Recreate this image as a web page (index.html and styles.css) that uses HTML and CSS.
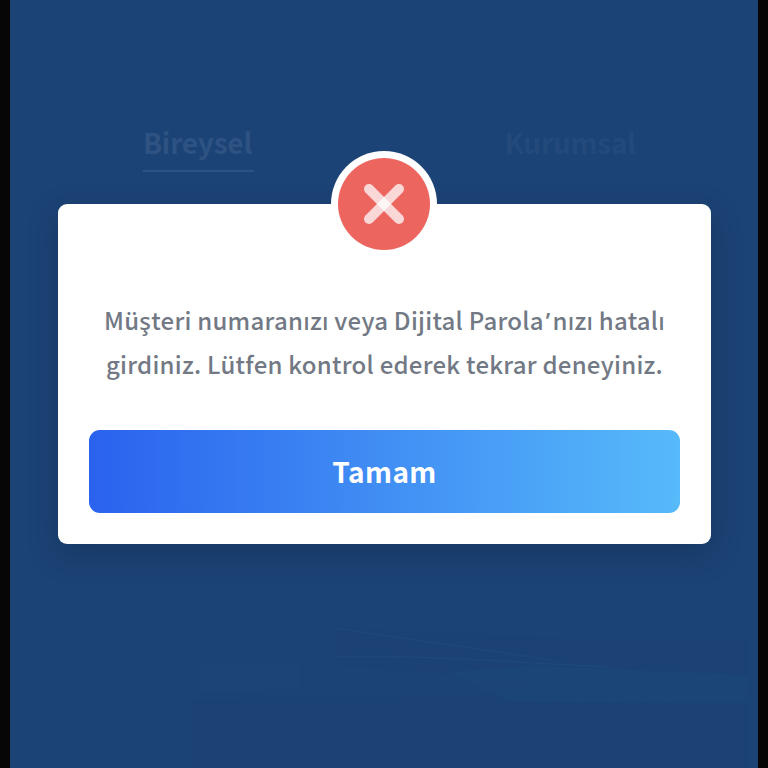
FILE: index.html
```html
<!DOCTYPE html>
<html lang="tr">
<head>
<meta charset="utf-8">
<title>Hata</title>
<link rel="stylesheet" href="styles.css">
</head>
<body>
<main class="screen">
  <svg class="backdrop" viewBox="0 0 748 768" aria-hidden="true">
    <path class="shade" d="M326 628L590 640L738 640L738 690L180 700L180 768L738 768L738 700L326 665Z"/>
    <path class="glow" d="M190 664L290 664L290 690L190 692Z"/>
    <path class="glow" d="M440 672L520 665L738 675L738 703L500 702Z"/>
    <path class="streak" d="M326 628C400 640 480 650 540 660"/>
    <path class="streak" d="M326 657C400 655 470 660 600 667"/>
  </svg>
  <nav class="tabs">
    <span class="tab tab-active">Bireysel</span>
    <span class="tab tab-muted">Kurumsal</span>
  </nav>
  <section class="card">
    <div class="badge">
      <svg class="badge-icon" viewBox="0 0 92 92" aria-hidden="true">
        <line x1="31" y1="31" x2="61" y2="61"/>
        <line x1="61" y1="31" x2="31" y2="61"/>
      </svg>
    </div>
    <p class="message">Müşteri numaranızı veya Dijital Parola<span class="apostrophe">’</span>nızı hatalı<br>girdiniz. Lütfen kontrol ederek tekrar deneyiniz.</p>
    <button class="action" type="button">Tamam</button>
  </section>
</main>
</body>
</html>
```
FILE: styles.css
```css
* {
  box-sizing: border-box;
}

html,
body {
  margin: 0;
  height: 768px;
  overflow: hidden;
  background: #060606;
}

.screen {
  position: relative;
  width: 748px;
  height: 768px;
  margin: 0 10px;
  padding: 124px 48px 0;
  background: #1c4375;
  font-family: "Noto Sans CJK SC", "Noto Sans", sans-serif;
}

.backdrop {
  position: absolute;
  inset: 0;
  width: 748px;
  height: 768px;
}

.shade {
  fill: #1b3f70;
  opacity: .2;
}

.glow {
  fill: #1e4a78;
  opacity: .35;
}

.streak {
  fill: none;
  stroke: #24527f;
  stroke-width: 1.5;
  opacity: .4;
}

.tabs {
  position: relative;
  display: flex;
  justify-content: space-between;
  height: 80px;
  padding: 0 74px 0 85px;
}

.tab {
  height: 48px;
  font-size: 28px;
  line-height: 36px;
  font-weight: 700;
  letter-spacing: -.2px;
}

.tab-active {
  width: 111px;
  color: #2e5282;
  border-bottom: 2px solid #2e5282;
}

.tab-muted {
  color: #234a7a;
}

.card {
  position: relative;
  display: flex;
  flex-direction: column;
  align-items: center;
  width: 653px;
  height: 340px;
  padding: 94px 31px 31px;
  background: #fff;
  border-radius: 9px;
  box-shadow: 0 10px 30px rgba(12, 32, 62, .28);
}

.badge {
  position: absolute;
  top: -46px;
  left: 280px;
  width: 92px;
  height: 92px;
  border-radius: 50%;
  background: #ec665f;
  box-shadow: 0 0 0 7px #fff;
}

.badge-icon {
  display: block;
  width: 92px;
  height: 92px;
  stroke: #fff;
  stroke-opacity: .75;
  stroke-width: 10;
  stroke-linecap: round;
}

.message {
  margin: 0;
  height: 132px;
  color: #727985;
  font-size: 24px;
  line-height: 43px;
  font-weight: 500;
  letter-spacing: .25px;
  text-align: center;
  white-space: nowrap;
}

.apostrophe {
  padding: 0 2px;
  font-family: "Noto Sans", sans-serif;
}

.action {
  width: 591px;
  height: 83px;
  border: 0;
  border-radius: 11px;
  background: linear-gradient(90deg, #2a62ee 0%, #57bafa 100%);
  color: #fff;
  font-family: inherit;
  font-size: 28px;
  font-weight: 700;
  letter-spacing: .4px;
  padding: 0 0 2px;
}
```
